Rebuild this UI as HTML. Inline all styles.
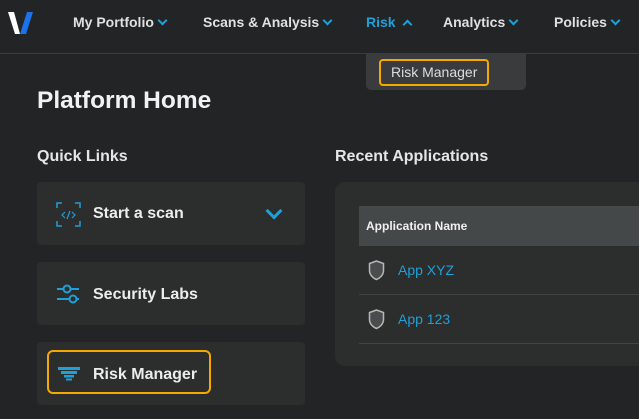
<!DOCTYPE html><html><head><style>
*{margin:0;padding:0;box-sizing:border-box}
body{width:639px;height:419px;overflow:hidden;background:#232425;font-family:"Liberation Sans",sans-serif;color:#e6e6e6;position:relative}
.a{position:absolute}
.nav{font-weight:bold;font-size:14px;color:#e0e0e0;top:14px;white-space:nowrap}
.chev{display:inline-block;width:7px;height:7px;border-right:2px solid #1ea0d8;border-bottom:2px solid #1ea0d8;transform:rotate(45deg);margin-left:5px;position:relative;top:-3px}
.card{background:#2c2d2d;border-radius:4px;left:37px;width:268px;height:63px}
.ct{font-weight:bold;font-size:16px;color:#ececec;left:93px;white-space:nowrap}
</style></head><body>
<svg class="a" style="left:8px;top:10px" width="26" height="26" viewBox="0 0 26 26"><polygon points="0,2 6,2 12,24 7,24" fill="#fff"/><polygon points="19,2 25,2 18,24 12,24" fill="#1a73e8"/></svg>
<div class="a nav" style="left:73px">My Portfolio<span class="chev"></span></div>
<div class="a nav" style="left:203px">Scans &amp; Analysis<span class="chev"></span></div>
<div class="a nav" style="left:366px;color:#1ea0d8">Risk<span class="chev" style="transform:rotate(225deg);top:1px;margin-left:8px"></span></div>
<div class="a nav" style="left:443px">Analytics<span class="chev"></span></div>
<div class="a nav" style="left:554px">Policies<span class="chev"></span></div>
<div class="a" style="left:0;top:53px;width:639px;height:1px;background:#3b3c3d"></div>
<div class="a" style="left:366px;top:54px;width:160px;height:36px;background:#3a3b3c;border-radius:0 0 5px 5px"></div>
<div class="a" style="left:379px;top:59px;width:110px;height:27px;border:2px solid #f5a800;border-radius:4px;font-size:14px;color:#ddd;padding:3px 0 0 10px;white-space:nowrap">Risk Manager</div>
<div class="a" style="left:37px;top:87px;font-size:24.5px;font-weight:bold;color:#f2f2f2">Platform Home</div>
<div class="a" style="left:37px;top:148px;font-size:16px;font-weight:bold">Quick Links</div>
<div class="a" style="left:335px;top:148px;font-size:16px;font-weight:bold">Recent Applications</div>
<div class="a card" style="top:182px"></div>
<svg class="a" style="left:56px;top:202px" width="25" height="25" viewBox="0 0 25 25" fill="none" stroke="#1ea0d8" stroke-width="1.5"><path d="M1 6V1h5M19 1h5v5M24 19v5h-5M6 24H1v-5"/><path d="M9 10l-3 3 3 3M16 10l3 3-3 3M14 9l-3 8" stroke-width="1.2"/></svg>
<div class="a ct" style="top:205px">Start a scan</div>
<div class="a" style="left:268px;top:205px;width:12px;height:12px;border-right:3px solid #1ea0d8;border-bottom:3px solid #1ea0d8;transform:rotate(45deg)"></div>
<div class="a card" style="top:262px"></div>
<svg class="a" style="left:56px;top:283px" width="24" height="22" viewBox="0 0 24 22" fill="none" stroke="#1ea0d8" stroke-width="2"><path d="M1 6h6M15 6h8M1 16h12M21 16h2"/><circle cx="11" cy="6" r="3.5"/><circle cx="17" cy="16" r="3.5"/></svg>
<div class="a ct" style="top:286px">Security Labs</div>
<div class="a card" style="top:342px"></div>
<div class="a" style="left:47px;top:350px;width:164px;height:44px;border:2px solid #f5a800;border-radius:6px"></div>
<svg class="a" style="left:58px;top:367px" width="22" height="14" viewBox="0 0 22 14" fill="#1ea0d8"><rect x="0" y="0" width="22" height="3"/><rect x="3" y="4" width="16" height="3"/><rect x="6" y="8" width="10" height="2.5"/><rect x="8" y="11.5" width="6" height="2"/></svg>
<div class="a ct" style="top:366px">Risk Manager</div>
<div class="a" style="left:335px;top:182px;width:320px;height:184px;background:#2c2d2d;border-radius:10px"></div>
<div class="a" style="left:359px;top:206px;width:290px;height:40px;background:#454849"></div>
<div class="a" style="left:366px;top:219px;font-size:12px;font-weight:bold;color:#f0f0f0">Application Name</div>
<svg class="a" style="left:368px;top:260px" width="17" height="21" viewBox="0 0 17 21"><path d="M8.5 1L1.5 3.5v7c0 4 3 7.5 7 9 4-1.5 7-5 7-9v-7z" fill="#4a4c4d" stroke="#b8b8b8" stroke-width="1.5"/></svg>
<div class="a" style="left:398px;top:262px;font-size:14px;color:#1ea0d8">App XYZ</div>
<div class="a" style="left:359px;top:294px;width:290px;height:1px;background:#424344"></div>
<svg class="a" style="left:368px;top:309px" width="17" height="21" viewBox="0 0 17 21"><path d="M8.5 1L1.5 3.5v7c0 4 3 7.5 7 9 4-1.5 7-5 7-9v-7z" fill="#4a4c4d" stroke="#b8b8b8" stroke-width="1.5"/></svg>
<div class="a" style="left:398px;top:311px;font-size:14px;color:#1ea0d8">App 123</div>
<div class="a" style="left:359px;top:343px;width:290px;height:1px;background:#424344"></div>
</body></html>
